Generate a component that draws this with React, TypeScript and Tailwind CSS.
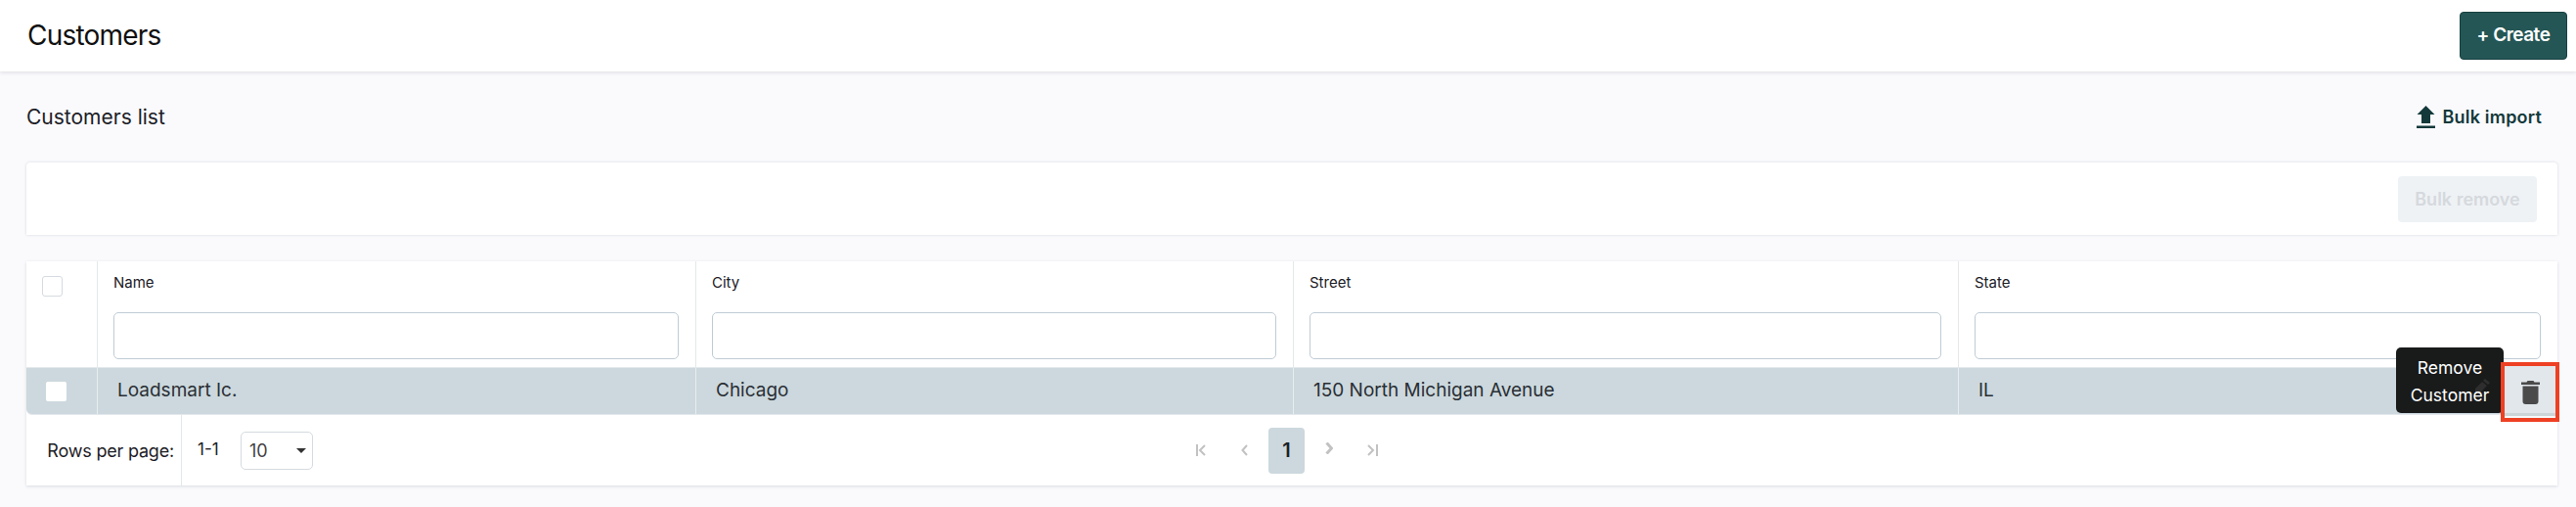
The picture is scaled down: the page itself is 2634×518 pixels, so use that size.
import React from "react";

const FONT = "font-['Inter','Liberation_Sans',sans-serif]";

const COLUMNS = ["Name", "City", "Street", "State"];
const ROW = ["Loadsmart Ic.", "Chicago", "150 North Michigan Avenue", "IL"];
const GRID = "grid grid-cols-[73px_612px_611px_680px_1fr]";

const TrashIcon: React.FC = () => (
  <svg width="19" height="24" viewBox="0 0 19 24" fill="#4a4a4a">
    <path d="M0 1.500h5.500L6.500 0h6l1 1.500H19V4H0z" />
    <path d="M1.500 5.500h16V21a3 3 0 0 1-3 3h-10a3 3 0 0 1-3-3z" />
  </svg>
);

const UploadIcon: React.FC = () => (
  <svg width="19" height="23" viewBox="0 0 19 23" fill="#14393a">
    <path d="M9.500 0l9 9H14v9H5V9H0.500z" />
    <path d="M0 20.500h19V23H0z" />
  </svg>
);

const PencilIcon: React.FC = () => (
  <svg width="16" height="14" viewBox="0 0 16 14" fill="#2e2e2e">
    <path d="M11 0l5 4-2 2-5-4zM8 3l5 4-7 7H1v-4z" />
  </svg>
);

const PageIcon: React.FC<{ width: number; d: string; strokeWidth?: number }> = ({ width, d, strokeWidth = 2 }) => (
  <svg width={width} height="12" viewBox={`0 0 ${width} 12`} fill="none" stroke="#c2c2c2" strokeWidth={strokeWidth}>
    <path d={d} />
  </svg>
);

const App: React.FC = () => {
  return (
    <div className={`${FONT} relative h-[518px] w-[2634px] overflow-hidden bg-[#fafafd] text-[#1c2026]`}>
      <header className="flex h-[73px] items-center justify-between bg-white pb-[2px] pl-[28px] pr-[9px] shadow-[0_1px_4px_rgba(40,50,60,0.15)]">
        <h1 className="text-[28px] font-normal tracking-[-0.8px] text-[#111]">Customers</h1>
        <button className="mt-[2px] h-[49px] w-[110px] rounded-[4px] border border-[#173f40] bg-[#245655] text-[19px] font-semibold tracking-[-0.5px] text-white">
          + Create
        </button>
      </header>

      <main className="pl-[27px] pr-[19px]">
        <div className="flex h-[93px] items-center justify-between pr-[16px]">
          <h2 className="text-[21px] font-normal">Customers list</h2>
          <button className="flex items-center gap-[7px] text-[18px] font-semibold tracking-[0.2px] text-[#14393a]">
            <UploadIcon />
            Bulk import
          </button>
        </div>

        <section className="flex h-[74px] items-center justify-end rounded-t-[4px] bg-white pr-[21px] shadow-[0_0_3px_rgba(40,50,60,0.18)]">
          <button className="h-[47px] w-[142px] rounded-[4px] bg-[#eff2f5] text-[18px] font-semibold text-[#d5d9dd]">
            Bulk remove
          </button>
        </section>

        <section className="mt-[27px] bg-white shadow-[0_1px_3px_rgba(40,50,60,0.16)]">
          <div className={`${GRID} h-[109px] border-b border-[#e3e8ec]`}>
            <div className="border-r border-[#e3e8ec] pl-[16px] pt-[15px]">
              <div className="h-[21px] w-[21px] rounded-[3px] border border-[#d5dbe0]" />
            </div>
            {COLUMNS.map((c, i) => (
              <div key={c} className={`pl-[16px] pr-[17px] pt-[11px] ${i < 3 ? "border-r border-[#e3e8ec]" : ""}`}>
                <div className="text-[15px] leading-[22px]">{c}</div>
                <div className="mt-[19px] h-[48px] rounded-[5px] border border-[#bfccd6] bg-white" />
              </div>
            ))}
          </div>

          <div className={`${GRID} h-[48px] rounded-bl-[6px] border-b border-[#e3e8ec] bg-[#ccd8dd] text-[19px] text-[#2a2f35]`}>
            <div className="flex items-center border-r border-[#e8edf0] pl-[20px]">
              <div className="h-[20px] w-[21px] rounded-[2px] bg-white" />
            </div>
            {ROW.map((v, i) => (
              <div key={v} className={`flex items-center pl-[20px] ${i < 3 ? "border-r border-[#e8edf0]" : ""}`}>
                {v}
              </div>
            ))}
          </div>

          <div className="flex h-[72px] items-center">
            <div className="flex h-full w-[159px] items-center justify-end border-r border-[#e3e8ec] pr-[7px] text-[18px] tracking-[-0.2px] whitespace-nowrap">
              Rows per page:
            </div>
            <span className="ml-[16px] w-[44px] text-[17px]">1-1</span>
            <div className="flex h-[39px] w-[74px] items-center justify-between rounded-[5px] border border-[#d5dbe0] pl-[8px] pr-[6px] text-[18px] text-[#444]">
              10
              <span className="h-0 w-0 border-x-[5px] border-t-[5px] border-x-transparent border-t-[#333]" />
            </div>
            <nav className="ml-[903px] flex items-center">
              <PageIcon width={10} d="M1 0v12M9 1L4 6l5 5" />
              <span className="ml-[36px]">
                <PageIcon width={7} d="M6 1L1.500 6 6 11" />
              </span>
              <span className="ml-[21px] flex h-[47px] w-[37px] items-center justify-center rounded-[4px] bg-[#ccd8dd] text-[20px] font-semibold text-[#1c2026]">
                1
              </span>
              <span className="ml-[21px] -translate-y-[2px]">
                <PageIcon width={8} strokeWidth={3} d="M1.500 0.500L6.500 6l-5 5.500" />
              </span>
              <span className="ml-[35px]">
                <PageIcon width={11} d="M1 1l5 5-5 5M10 0v12" />
              </span>
            </nav>
          </div>
        </section>
      </main>

      <div className="absolute left-[2450px] top-[355px] flex h-[67px] w-[110px] items-center justify-center rounded-[5px] bg-[#191a1a] pt-[2px] text-center text-[17.500px] leading-[28px] text-white">
        <span className="absolute left-[80px] top-[32px]">
          <PencilIcon />
        </span>
        <span className="relative">
          Remove
          <br />
          Customer
        </span>
      </div>
      <div className="absolute left-[2557px] top-[370px] flex h-[61px] w-[60px] items-center justify-center border-[4px] border-[#ee4023] bg-[#e1e7ea]">
        <TrashIcon />
        <div className="absolute inset-x-0 top-[48px] h-[3px] bg-[#ccd6d9]" />
        <div className="absolute inset-x-0 top-[51px] bottom-0 bg-[#f7f8f9]" />
      </div>
    </div>
  );
};

export default App;
